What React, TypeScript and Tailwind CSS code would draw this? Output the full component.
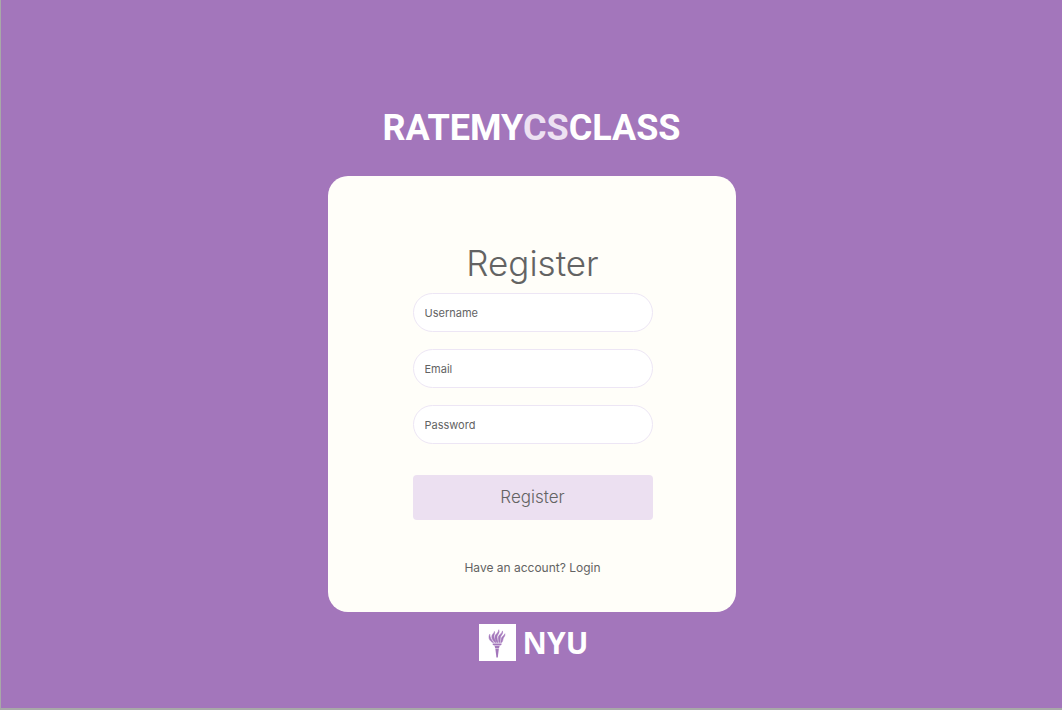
import React from 'react';

const fields = [
  { id: 'username', label: 'Username', type: 'text' },
  { id: 'email', label: 'Email', type: 'email' },
  { id: 'password', label: 'Password', type: 'password' },
];

function Torch() {
  return (
    <svg viewBox="0 0 37 37" className="size-[37px] shrink-0" aria-hidden="true">
      <rect width="37" height="37" fill="#fff" />
      <g fill="#a376bb">
        <path d="M13.7 19.4h8.8v1.4l-1.4.6h-6l-1.4-.6z" />
        <path d="M15.6 22h5l-.7 2.4h-3.6z" />
        <path d="M16.4 25h3.4l-1 8.5h-1.4z" />
        <g stroke="#a376bb" strokeWidth="0.5" strokeLinejoin="round">
          <path d="M13.7 18.6c-2.6-1.5-4-3.6-3.7-6 .1-1 .4-1.8.8-2.4.1 2.9 1 4.9 3.9 8.4z" />
          <path d="M15.9 18.6c-2.4-2.5-3.5-4.5-3-6.8.4-1.8 2.2-2.6 2.5-4.4.8 1.8-.5 3.2-.5 5.1 0 2.2 1.8 3.9 2.3 6.1z" />
          <path d="M17.9 18.6c-1.2-2.2-2.3-3.8-1.9-6.2.4-2.5 3.4-3.3 3.8-6.7 1.4 3.2-1.6 4.8-1.8 7.3-.1 1.9 1 3.4 1 5.6z" />
          <path d="M19.8 18.6c0-2.3-.9-3.9-.3-6 .6-2.2 3.2-2.5 4-5.7.8 3-1.5 4.2-2 6.2-.4 1.8 0 3.3-.6 5.5z" />
          <path d="M21.6 18.6c.8-1.9.3-3.4 1.1-5 .8-1.6 2.5-1.9 3.2-3.9.4 2.4-1.2 3.3-1.7 4.9-.4 1.5-.5 2.8-1.5 4z" />
        </g>
      </g>
    </svg>
  );
}

export default function App() {
  return (
    <div className="flex min-h-screen flex-col items-center border-b-2 border-l border-[#a8a8a8] bg-[#a376bb] pt-[104px] font-['Inter',sans-serif]">
      <h1 className="mb-6 font-['Roboto',sans-serif] text-4xl leading-[48px] font-bold whitespace-nowrap text-white">
        RATEMY<span className="text-[#ede1f2]">CS</span>CLASS
      </h1>

      <main className="w-full max-w-[408px] rounded-[20px] bg-[#fffef9] pt-[65px] pr-[83px] pb-8 pl-[85px] text-[#636363]">
        <form className="flex flex-col" onSubmit={(e) => e.preventDefault()}>
          <h2 className="mb-2 text-center text-[35px] leading-[44px] font-light">Register</h2>
          <div className="flex flex-col gap-[17px]">
            {fields.map((f) => (
              <input
                key={f.id}
                id={f.id}
                name={f.id}
                type={f.type}
                aria-label={f.label}
                placeholder={f.label}
                className="h-[39px] w-full rounded-full border border-[#ede6f5] bg-white px-[11px] text-[11px] placeholder:text-[#636363]"
              />
            ))}
          </div>
          <button type="submit" className="mt-[31px] h-[45px] w-full rounded bg-[#ece0f1] text-[17px] font-light">
            Register
          </button>
        </form>
        <p className="mt-9 text-center text-xs leading-6">
          Have an account? <a href="#login">Login</a>
        </p>
      </main>

      <footer className="mt-3 flex items-center gap-[7px] pl-1 text-white">
        <Torch />
        <span className="font-['Open_Sans',sans-serif] text-[30px] leading-9 font-bold">NYU</span>
      </footer>
    </div>
  );
}
